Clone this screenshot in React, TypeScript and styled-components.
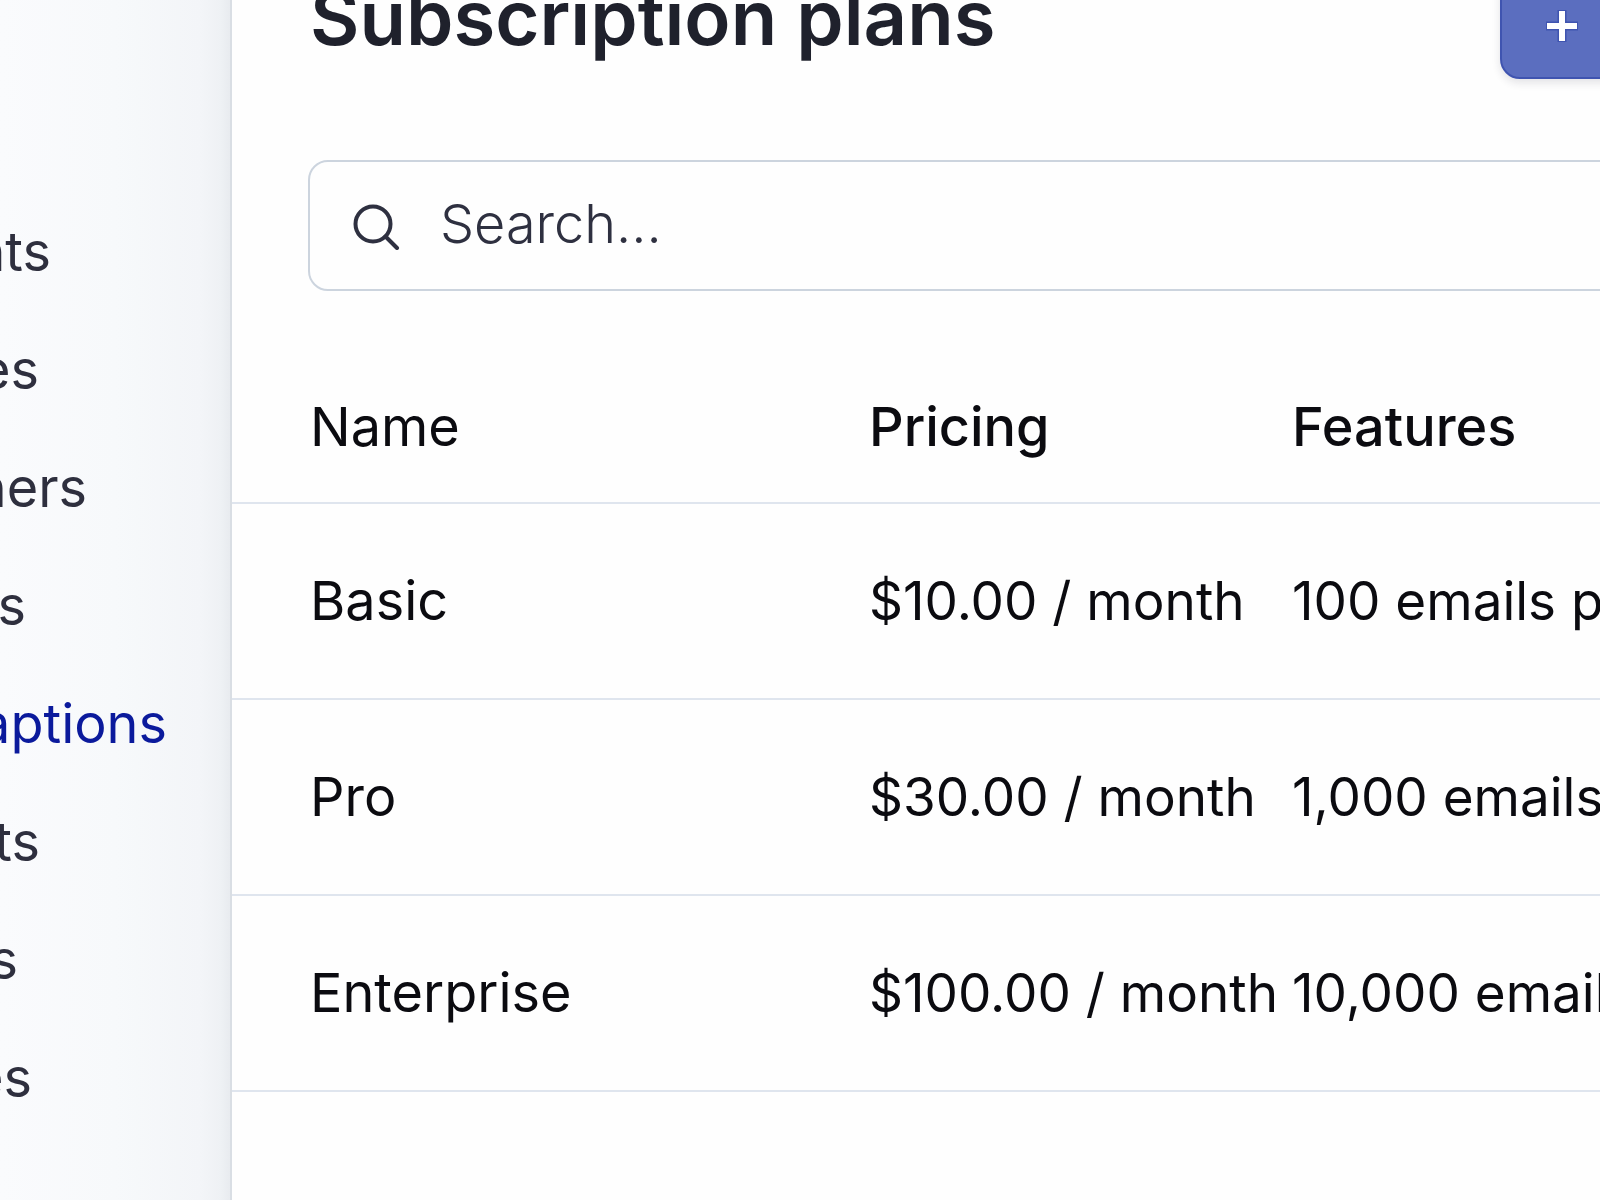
import React from "react";
import styled, { createGlobalStyle } from "styled-components";

const GlobalStyle = createGlobalStyle`
  * { box-sizing: border-box; }
  body {
    margin: 0;
    background: #fefefe;
    font-family: Inter, "Liberation Sans", sans-serif;
    font-size: 54px;
    line-height: 64px;
    color: #0b0b10;
    overflow: hidden;
  }
`;

const Page = styled.div`
  display: flex;
  min-height: 100vh;
  overflow: hidden;
`;

const Sidebar = styled.nav`
  flex: 0 0 232px;
  padding-top: 193px;
  overflow: hidden;
  border-right: 2px solid #d9dee4;
  background: linear-gradient(90deg, #fafbfd 0%, #f7f9fb 50%, #f3f5f8 87%, #eef1f4 96%, #e8ebef 100%);
`;

const NavList = styled.ul`
  display: flex;
  flex-direction: column;
  margin: 0;
  padding: 0;
  list-style: none;
`;

const NavItem = styled.li<{ $reach: number }>`
  display: flex;
  justify-content: flex-end;
  width: ${(p) => p.$reach}px;
  height: 118px;
  align-items: center;
`;

const NavLink = styled.a<{ $active?: boolean }>`
  color: ${(p) => (p.$active ? "#0b1a9c" : "#2e2f3e")};
  text-decoration: none;
  white-space: nowrap;
`;

const Main = styled.main`
  flex: 1;
  min-width: 0;
  overflow: hidden;
`;

const Tools = styled.div`
  margin: -45px -40px 0 76px;
`;

const Header = styled.header`
  display: flex;
  align-items: flex-end;
  justify-content: space-between;
`;

const Title = styled.h1`
  margin: 0;
  padding-left: 2px;
  font-size: 76px;
  line-height: 124px;
  font-weight: 600;
  color: #1f212c;
  white-space: nowrap;
`;

const AddButton = styled.button`
  display: flex;
  align-items: center;
  width: 140px;
  height: 106px;
  padding: 0 44px;
  border: 2px solid #3f54b0;
  border-radius: 20px;
  background: #5b6ebf;
  color: #fff;
  box-shadow: 0 4px 8px rgba(30, 30, 60, 0.12);
`;

const SearchBox = styled.label`
  display: flex;
  align-items: center;
  gap: 40px;
  height: 131px;
  margin-top: 81px;
  padding: 0 42px;
  border: 2px solid #ccd4de;
  border-radius: 20px;
  color: #2e3040;
`;

const SearchInput = styled.input`
  flex: 1;
  min-width: 0;
  padding: 0 0 4px;
  border: 0;
  outline: 0;
  background: transparent;
  font: inherit;
  font-weight: 300;
  color: inherit;
  &::placeholder {
    color: #2e3040;
    opacity: 1;
  }
`;

const Table = styled.table`
  width: 100%;
  margin-top: 54px;
  table-layout: fixed;
  border-collapse: separate;
  border-spacing: 0;
`;

const Row = styled.tr`
  height: 196px;
`;

const HeadRow = styled.tr`
  height: 159px;
`;

const Head = styled.th<{ $weight: number; $width?: number }>`
  width: ${(p) => (p.$width ? `${p.$width}px` : "auto")};
  padding: 6px 0 0;
  border-bottom: 2px solid #dfe5ee;
  font-weight: ${(p) => p.$weight};
  text-align: left;
  white-space: nowrap;
  &:first-child { padding-left: 78px; }
`;

const Cell = styled.td`
  padding: 0;
  border-bottom: 2px solid #dfe5ee;
  font-size: 53px;
  white-space: nowrap;
  &:first-child {
    padding-left: 78px;
    font-size: 54px;
  }
`;

const nav = [
  { label: "nts", reach: 51 },
  { label: "es", reach: 39 },
  { label: "ners", reach: 87 },
  { label: "s", reach: 26 },
  { label: "aptions", reach: 167, active: true },
  { label: "ts", reach: 40 },
  { label: "s", reach: 18 },
  { label: "es", reach: 32 },
];

const plans = [
  ["Basic", "$10.00 / month", "100 emails p"],
  ["Pro", "$30.00 / month", "1,000 emails"],
  ["Enterprise", "$100.00 / month", "10,000 emails"],
];

const SearchIcon = () => (
  <svg width="48" height="48" viewBox="0 0 48 48" fill="none" stroke="currentColor" strokeWidth="4" strokeLinecap="round" aria-hidden="true">
    <circle cx="21" cy="22" r="17.5" />
    <path d="M33.5 34.5 45 46" />
  </svg>
);

const PlusIcon = () => (
  <svg width="32" height="32" viewBox="0 0 32 32" fill="none" stroke="currentColor" strokeWidth="6" aria-hidden="true">
    <path stroke="#3f54b0" strokeWidth="9" d="M16 0v32M0 16h32" />
    <path strokeWidth="6" d="M16 1v30M1 16h30" />
  </svg>
);

export default function App() {
  return (
    <>
      <GlobalStyle />
      <Page>
        <Sidebar>
          <NavList>
            {nav.map((n, i) => (
              <NavItem key={i} $reach={n.reach}>
                <NavLink href="#" $active={n.active}>{n.label}</NavLink>
              </NavItem>
            ))}
          </NavList>
        </Sidebar>
        <Main>
          <Tools>
            <Header>
              <Title>Subscription plans</Title>
              <AddButton aria-label="Add plan"><PlusIcon /></AddButton>
            </Header>
            <SearchBox>
              <SearchIcon />
              <SearchInput type="text" aria-label="Search" placeholder="Search..." />
            </SearchBox>
          </Tools>
          <Table>
            <thead>
              <HeadRow>
                <Head $weight={400} $width={637}>Name</Head>
                <Head $weight={500} $width={423}>Pricing</Head>
                <Head $weight={500}>Features</Head>
              </HeadRow>
            </thead>
            <tbody>
              {plans.map((p) => (
                <Row key={p[0]}>
                  {p.map((c) => <Cell key={c}>{c}</Cell>)}
                </Row>
              ))}
            </tbody>
          </Table>
        </Main>
      </Page>
    </>
  );
}
